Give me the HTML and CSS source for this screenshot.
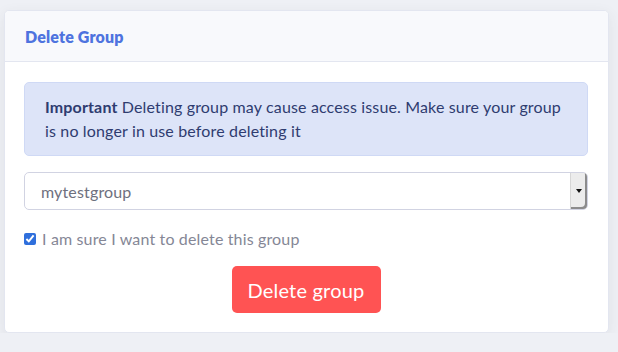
FILE: index.html
```html
<!DOCTYPE html>
<html lang="en">
<head>
    <meta charset="UTF-8">
    <meta name="viewport" content="width=device-width, initial-scale=1.0">
    <title>Delete Group</title>
    <link rel="stylesheet" href="styles.css">
</head>
<body>
    <div class="card">
        <div class="card-header">
            <h6>Delete Group</h6>
        </div>
        <div class="card-body">
            <!-- Warning -->
            <div class="alert">
                <b>Important</b> Deleting group may cause access issue. Make sure your group is no longer in use before deleting it
            </div>

            <!-- Group picker -->
            <div class="select">
                <span class="select-value">mytestgroup</span>
                <span class="select-arrow"><i></i></span>
            </div>

            <label class="check">
                <input type="checkbox" checked>
                <span>I am sure I want to delete this group</span>
            </label>

            <div class="actions">
                <button class="btn-danger">Delete group</button>
            </div>
        </div>
    </div>
</body>
</html>
```

FILE: styles.css
```css
body {
    font-family: "Lato", "Open Sans", sans-serif;
    font-size: 16px;
    letter-spacing: 0.15px;
    margin: 0;
    padding: 10px 9px 0 4px;
    background-color: #eef0f5;
}
.card {
    background-color: #fff;
    border: 1px solid #e3e6f0;
    border-radius: 5px;
    box-shadow: 0 4px 14px rgba(58, 59, 69, 0.08);
    overflow: hidden;
}
.card-header {
    background-color: #f8f9fc;
    border-bottom: 1px solid #e3e6f0;
    height: 50px;
    display: flex;
    align-items: center;
    padding: 0 20px;
}
.card-header h6 {
    margin: 0;
    font-size: 16px;
    font-weight: 800;
    color: #4e73df;
}
.card-body {
    padding: 20px 20px 19px 19px;
}
.alert {
    background-color: #dde4f8;
    border: 1px solid #cfd9f5;
    border-radius: 5px;
    color: #2f3c70;
    line-height: 24px;
    padding: 12px 20px;
}
.alert b {
    font-weight: 700;
}
.select {
    margin-top: 16px;
    height: 36px;
    border: 1px solid #d1d3e2;
    border-radius: 5px;
    display: flex;
    align-items: center;
    justify-content: space-between;
    color: #6e707e;
}
.select-value {
    padding-left: 16px;
}
.select-arrow {
    width: 16px;
    height: 100%;
    background-color: #ececec;
    border-left: 1px solid #d6d6d6;
    border-radius: 0 4px 4px 0;
    box-shadow: inset -2px -2px 0 #8c8c8c;
    display: flex;
    align-items: center;
    justify-content: center;
}
.select-arrow i {
    width: 0;
    height: 0;
    border-left: 3px solid transparent;
    border-right: 3px solid transparent;
    border-top: 4px solid #111;
    margin-right: 1px;
}
.check {
    display: flex;
    align-items: center;
    gap: 6px;
    margin-top: 19px;
    color: #858796;
}
.check input {
    margin: 0;
    width: 12px;
    height: 12px;
    accent-color: #2f6fdc;
}
.actions {
    display: flex;
    justify-content: center;
    margin-top: 18px;
}
.btn-danger {
    font-family: inherit;
    letter-spacing: 0.2px;
    background-color: #ff5353;
    color: #fff;
    border: none;
    border-radius: 5px;
    font-size: 20px;
    width: 149px;
    height: 47px;
}
```
